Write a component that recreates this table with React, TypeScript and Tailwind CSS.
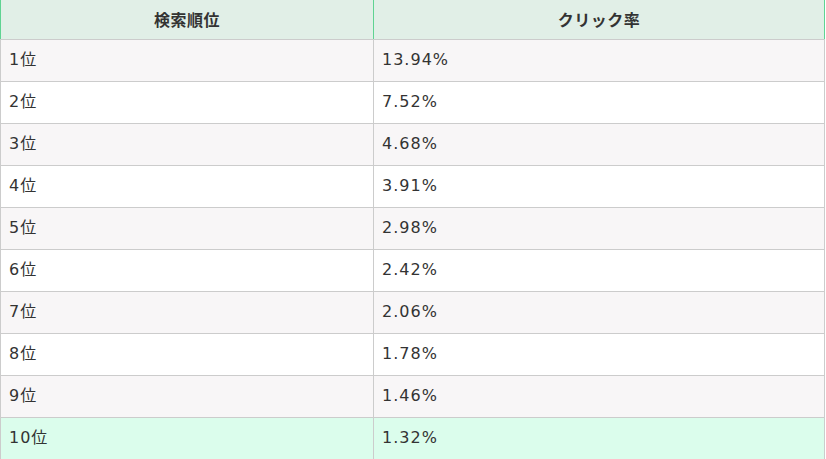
import React from "react";

const rows: [string, string][] = [
  ["1位", "13.94%"],
  ["2位", "7.52%"],
  ["3位", "4.68%"],
  ["4位", "3.91%"],
  ["5位", "2.98%"],
  ["6位", "2.42%"],
  ["7位", "2.06%"],
  ["8位", "1.78%"],
  ["9位", "1.46%"],
  ["10位", "1.32%"],
];

export default function App() {
  return (
    <div className="bg-white w-[826px] h-[459px] overflow-hidden" style={{ fontFamily: '"DejaVu Sans", "Noto Sans CJK JP", sans-serif' }}>
      <table className="w-[825px] border-collapse table-fixed">
        <colgroup>
          <col className="w-[373px]" />
          <col />
        </colgroup>
        <thead>
          <tr className="h-[39px] bg-[#e1efe7]">
            <th className="border-x border-x-[#5fd392] border-b border-b-[#cccccc] text-center align-middle text-[16px] font-bold text-[#333333] tracking-[0.5px] pb-[1px]" style={{ fontFamily: '"Noto Sans CJK JP", sans-serif' }}>
              検索順位
            </th>
            <th className="border-x border-x-[#5fd392] border-b border-b-[#cccccc] text-center align-middle text-[16px] font-bold text-[#333333] tracking-[0.5px] pb-[1px]" style={{ fontFamily: '"Noto Sans CJK JP", sans-serif' }}>
              クリック率
            </th>
          </tr>
        </thead>
        <tbody>
          {rows.map(([a, b], i) => {
            const bg = i === 9 ? "bg-[#dbfdec]" : i % 2 === 0 ? "bg-[#f8f6f7]" : "bg-white";
            return (
              <tr key={a} className={`h-[42px] ${bg}`}>
                <td className="border border-[#cccccc] px-[8px] text-[16px] text-[#333333] tracking-[1px] align-middle">{a}</td>
                <td className="border border-[#cccccc] px-[8px] text-[16px] text-[#333333] tracking-[1px] align-middle">{b}</td>
              </tr>
            );
          })}
        </tbody>
      </table>
    </div>
  );
}
